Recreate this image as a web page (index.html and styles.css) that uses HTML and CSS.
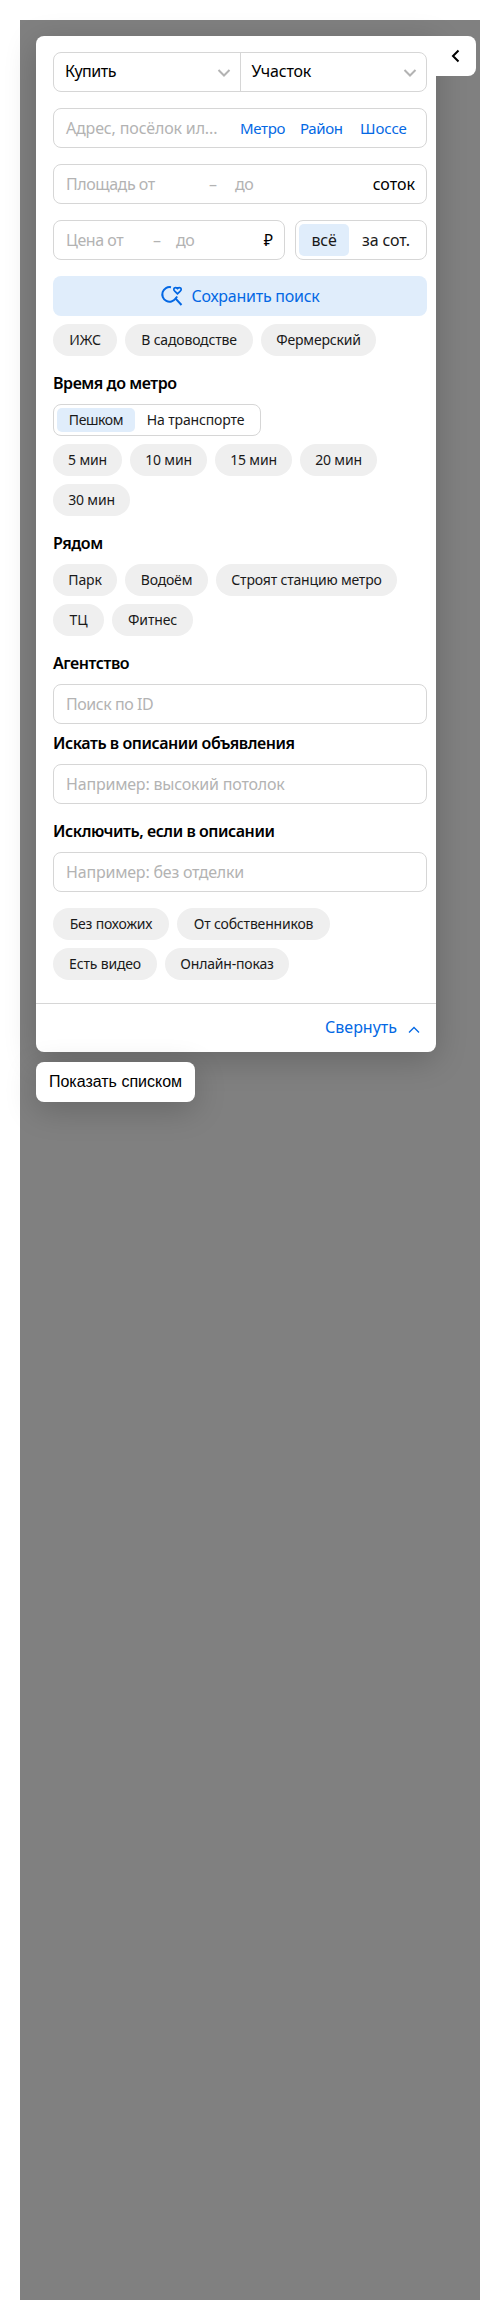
FILE: index.html
```html
<!DOCTYPE html>
<html lang="ru">
<head>
<meta charset="utf-8">
<title>Поиск участков</title>
<link rel="stylesheet" href="styles.css">
</head>
<body>
<main class="map">
  <section class="panel">
    <button class="collapse" aria-label="Скрыть"><svg width="20" height="20" viewBox="0 0 20 20"><path d="M12.500 4.500 7 10l5.500 5.500" fill="none" stroke="#000" stroke-width="2"/></svg></button>
    <div class="filters">
      <div class="selects">
        <div class="select"><span>Купить</span><svg class="chev" width="14" height="10" viewBox="0 0 14 10"><path d="M1.500 2 7 7.500 12.500 2"/></svg></div>
        <div class="select lot"><span>Участок</span><svg class="chev" width="14" height="10" viewBox="0 0 14 10"><path d="M1.500 2 7 7.500 12.500 2"/></svg></div>
      </div>
      <div class="field geo"><span class="hint geo-hint">Адрес, посёлок ил...</span><a>Метро</a><a>Район</a><a>Шоссе</a></div>
      <div class="field area"><span class="hint from">Площадь от</span><span class="hint dash">–</span><span class="hint">до</span><span class="unit">соток</span></div>
      <div class="price-row">
        <div class="field price"><span class="hint from">Цена от</span><span class="hint dash">–</span><span class="hint">до</span><span class="unit">₽</span></div>
        <div class="toggle big"><span class="on">всё</span><span>за сот.</span></div>
      </div>
      <button class="save"><svg width="24" height="24" viewBox="0 0 24 24" fill="none" stroke="#0468e4" stroke-width="2"><path d="M11 3.200A7.300 7.300 0 1 0 15.600 14.500L21.500 21M15.600 14.500 17.200 12.500"/><path stroke-width="1.700" d="M17.500 9.800 14.500 6.800C12.500 4.500 15.400 2.400 17.500 4.600 19.600 2.400 22.500 4.500 20.500 6.800Z"/></svg><span>Сохранить поиск</span></button>
      <div class="chips"><span class="w64">ИЖС</span><span class="w128">В садоводстве</span><span class="w115">Фермерский</span></div>
      <h2>Время до метро</h2>
      <div class="toggle small"><span class="on">Пешком</span><span>На транспорте</span></div>
      <div class="chips"><span class="w69">5 мин</span><span class="w77">10 мин</span><span class="w77">15 мин</span><span class="w77">20 мин</span><span class="w77">30 мин</span></div>
      <h2>Рядом</h2>
      <div class="chips"><span class="w64">Парк</span><span class="w83">Водоём</span><span class="w181">Строят станцию метро</span><span class="w51">ТЦ</span><span class="w81">Фитнес</span></div>
      <h2>Агентство</h2>
      <div class="field"><span class="hint">Поиск по ID</span></div>
      <h2 class="tight">Искать в описании объявления</h2>
      <div class="field"><span class="hint example">Например: высокий потолок</span></div>
      <h2>Исключить, если в описании</h2>
      <div class="field"><span class="hint example">Например: без отделки</span></div>
      <div class="chips last"><span class="w116">Без похожих</span><span class="w153">От собственников</span><span class="w104">Есть видео</span><span class="w124">Онлайн-показ</span></div>
    </div>
    <footer><span>Свернуть</span><svg width="12" height="8" viewBox="0 0 12 8"><path d="M1 6.500 6 1.500l5 5" fill="none" stroke="#0468e4" stroke-width="1.300"/></svg></footer>
  </section>
  <button class="list">Показать списком</button>
</main>
</body>
</html>
```
FILE: styles.css
```css
* { box-sizing: border-box; }
body { margin: 0; padding: 20px 20px 0; background: #fff; font: 16px/20px "Noto Sans", sans-serif; letter-spacing: -0.45px; color: #000; }
button { border: 0; font: inherit; letter-spacing: inherit; padding: 0; }
.map { height: 2280px; background: #808080; padding: 16px; }
.panel { position: relative; width: 400px; height: 1016px; background: #fff; border-radius: 8px 0 8px 8px; box-shadow: 0 8px 32px rgba(0,0,0,.2); display: flex; flex-direction: column; }
.collapse { position: absolute; left: 400px; top: 0; width: 40px; height: 40px; background: #fff; border-radius: 0 8px 8px 0; display: flex; align-items: center; justify-content: center; }
.filters { padding: 16px 9px 0 17px; height: 967px; }
.selects { display: flex; height: 40px; border: 1px solid #d6d6d6; border-radius: 8px; margin-bottom: 16px; }
.select { flex: 1; display: flex; align-items: center; justify-content: space-between; padding: 0 9px 2px 11px; }
.lot { border-left: 1px solid #d6d6d6; letter-spacing: -.2px; }
.chev { fill: none; stroke: #b3b3b3; stroke-width: 2; margin-top: 3px; }
.field { display: flex; align-items: center; height: 40px; border: 1px solid #d6d6d6; border-radius: 8px; padding: 0 11px 0 12px; white-space: nowrap; }
.hint { color: #b3b3b3; }
.example { letter-spacing: -.2px; }
.geo { margin-bottom: 16px; }
.geo-hint { flex: none; width: 174px; letter-spacing: -.15px; }
.geo a { flex: none; width: 60px; color: #0468e4; font-size: 15px; letter-spacing: -.35px; }
.geo a:last-child { width: 48px; letter-spacing: -.1px; }
.area { margin-bottom: 16px; }
.area .from { width: 143px; }
.dash { width: 26px; }
.unit { margin-left: auto; letter-spacing: 0; }
.price-row { display: flex; gap: 10px; margin-bottom: 16px; }
.price { width: 232px; }
.price .from { width: 87px; }
.price .dash { width: 23px; }
.toggle { display: flex; border: 1px solid #d6d6d6; border-radius: 8px; padding: 3px; color: #1a1a1a; letter-spacing: -.15px; }
.toggle span { display: flex; align-items: center; justify-content: center; border-radius: 5px; flex: 1; white-space: nowrap; }
.toggle .on { background: #e0edfb; flex: none; }
.big { width: 132px; }
.big .on { width: 50px; }
.small { width: 208px; height: 32px; font-size: 14px; margin-bottom: 8px; }
.small .on { width: 78px; letter-spacing: -.4px; }
.small span + span { padding-right: 1px; }
.save { width: 374px; height: 40px; border-radius: 8px; background: #e0edfb; color: #0468e4; display: flex; align-items: center; justify-content: center; gap: 7px; margin-bottom: 8px; letter-spacing: -.25px; }
.save span { padding-bottom: 1px; }
.chips { display: flex; flex-wrap: wrap; gap: 8px; font-size: 14px; letter-spacing: -.18px; color: #1a1a1a; }
.chips span { height: 32px; line-height: 32px; border-radius: 16px; background: #efefef; text-align: center; white-space: nowrap; }
.w51 { width: 51px; } .w64 { width: 64px; } .w69 { width: 69px; } .w77 { width: 77px; }
.w81 { width: 81px; } .w83 { width: 83px; } .w104 { width: 104px; } .w115 { width: 115px; }
.w116 { width: 116px; } .w124 { width: 124px; } .w128 { width: 128px; } .w153 { width: 153px; } .w181 { width: 181px; }
h2 { margin: 0; height: 48px; padding-top: 17px; font-size: 16px; line-height: 20px; font-weight: 600; white-space: nowrap; }
h2.tight { height: 40px; padding-top: 9px; }
.last { margin-top: 16px; }
footer { height: 49px; border-top: 1px solid #d6d6d6; color: #0468e4; letter-spacing: 0; display: flex; align-items: center; justify-content: flex-end; gap: 11px; padding: 0 16px 2px 0; }
footer svg { margin-top: 5px; }
.list { display: block; position: relative; margin-top: 10px; width: 159px; height: 40px; border-radius: 8px; background: #fff; font: 16px "Liberation Sans", Arial, sans-serif; letter-spacing: 0; box-shadow: 0 8px 32px rgba(0,0,0,.2); }
```
